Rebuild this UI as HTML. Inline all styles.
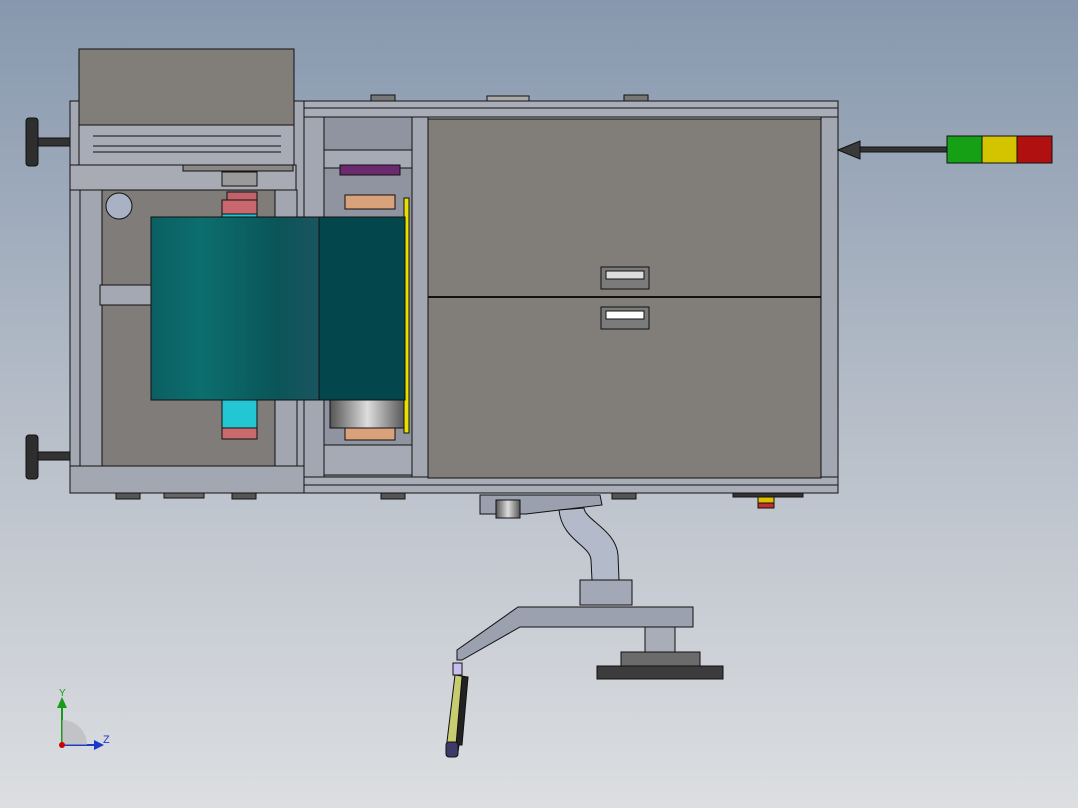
<!DOCTYPE html>
<html><head><style>html,body{margin:0;padding:0;width:1078px;height:808px;overflow:hidden}</style></head>
<body>
<svg width="1078" height="808" viewBox="0 0 1078 808" xmlns="http://www.w3.org/2000/svg">
<defs>
<linearGradient id="bg" x1="0" y1="0" x2="0" y2="1"><stop offset="0" stop-color="#8798ae"/><stop offset="0.55" stop-color="#b9c0ca"/><stop offset="1" stop-color="#dcdee1"/></linearGradient>
<linearGradient id="teal" x1="0" y1="0" x2="1" y2="0"><stop offset="0" stop-color="#0b5f62"/><stop offset="0.3" stop-color="#0c6e6e"/><stop offset="0.75" stop-color="#0a5558"/><stop offset="1" stop-color="#1b5560"/></linearGradient>
<linearGradient id="cyl" x1="0" y1="0" x2="1" y2="0"><stop offset="0" stop-color="#555"/><stop offset="0.5" stop-color="#ddd"/><stop offset="1" stop-color="#555"/></linearGradient>
</defs>
<rect width="1078" height="808" fill="url(#bg)"/>
<g stroke="#111" stroke-width="1">
<!-- knobs -->
<rect x="38" y="138" width="34" height="8" fill="#333"/><rect x="26" y="118" width="12" height="48" rx="3" fill="#2e2e2e"/>
<rect x="38" y="452" width="34" height="8" fill="#333"/><rect x="26" y="435" width="12" height="44" rx="3" fill="#2e2e2e"/>
<!-- left frame -->
<rect x="70" y="101" width="234" height="392" fill="#a4a8b2"/>
<rect x="100" y="188" width="175" height="280" fill="#7f7c79"/>
<rect x="70" y="165" width="226" height="25" fill="#a8abb3"/>
<rect x="80" y="190" width="22" height="278" fill="#a2a6b0"/>
<rect x="275" y="190" width="22" height="278" fill="#a2a6b0"/>
<rect x="100" y="285" width="52" height="20" fill="#a4a8b2"/>
<rect x="70" y="466" width="234" height="27" fill="#a3a7b1"/>
<circle cx="119" cy="206" r="13" fill="#a9b2c4"/>
<!-- top box -->
<rect x="79" y="49" width="215" height="76" fill="#817d79"/>
<rect x="79" y="125" width="215" height="40" fill="#a8acb6"/>
<line x1="93" y1="136" x2="281" y2="136"/><line x1="93" y1="146" x2="281" y2="146"/><line x1="93" y1="152" x2="281" y2="152"/>
<rect x="183" y="165" width="110" height="6" fill="#8a8784"/>
<!-- spindle -->
<rect x="222" y="172" width="35" height="14" fill="#9a9a9a"/>
<rect x="227" y="192" width="30" height="10" fill="#c0636a"/>
<rect x="222" y="200" width="35" height="14" fill="#c9686e"/>
<rect x="222" y="214" width="35" height="4" fill="#1cc7d2"/>
<rect x="222" y="400" width="35" height="28" fill="#22c7d3"/>
<rect x="222" y="428" width="35" height="11" fill="#c96a6e"/>
<!-- right frame -->
<rect x="304" y="101" width="534" height="392" fill="#a6aab4"/>
<rect x="304" y="101" width="534" height="16" fill="#a9adb7"/>
<line x1="304" y1="108" x2="838" y2="108"/>
<rect x="304" y="477" width="534" height="16" fill="#a9adb7"/>
<line x1="304" y1="485" x2="838" y2="485"/>
<rect x="304" y="117" width="20" height="360" fill="#a3a7b1"/>
<rect x="324" y="117" width="90" height="360" fill="#8f94a0"/>
<rect x="324" y="150" width="90" height="18" fill="#a6aab4"/>
<rect x="324" y="445" width="90" height="30" fill="#a6aab4"/>
<rect x="412" y="117" width="16" height="360" fill="#a3a7b1"/>
<rect x="821" y="117" width="17" height="360" fill="#a3a7b1"/>
<rect x="340" y="165" width="60" height="10" fill="#6b2a6e"/>
<rect x="345" y="195" width="50" height="14" fill="#d9a27a"/>
<rect x="345" y="428" width="50" height="12" fill="#d9a27a"/>
<rect x="330" y="400" width="75" height="28" fill="url(#cyl)"/>
<rect x="404" y="198" width="5" height="235" fill="#e8e000"/>
<!-- drawers -->
<rect x="428" y="119" width="393" height="178" fill="#817d79"/>
<rect x="428" y="297" width="393" height="181" fill="#817d79"/>
<line x1="428" y1="297" x2="821" y2="297" stroke-width="2"/>
<rect x="601" y="267" width="48" height="22" fill="#7c7b7c"/><rect x="606" y="271" width="38" height="8" fill="#ddd"/>
<rect x="601" y="307" width="48" height="22" fill="#7c7b7c"/><rect x="606" y="311" width="38" height="8" fill="#fff"/>
<!-- teal sheet -->
<rect x="151" y="217" width="168" height="183" fill="url(#teal)"/>
<rect x="319" y="217" width="86" height="183" fill="#03464c"/>
<!-- bumps -->
<rect x="371" y="95" width="24" height="6" fill="#777"/><rect x="487" y="96" width="42" height="5" fill="#aaa"/><rect x="624" y="95" width="24" height="6" fill="#777"/>
<rect x="116" y="493" width="24" height="6" fill="#555"/><rect x="164" y="493" width="40" height="5" fill="#666"/><rect x="232" y="493" width="24" height="6" fill="#555"/><rect x="381" y="493" width="24" height="6" fill="#555"/><rect x="612" y="493" width="24" height="6" fill="#555"/>
<rect x="733" y="493" width="70" height="4" fill="#333"/>
<rect x="758" y="497" width="16" height="6" fill="#e0c000"/><rect x="758" y="503" width="16" height="5" fill="#c03030"/>
<!-- light tower -->
<polygon points="838,150 860,141 860,159" fill="#3a3a3a"/>
<rect x="860" y="147" width="87" height="5" fill="#333"/>
<rect x="947" y="136" width="35" height="27" fill="#15a015"/>
<rect x="982" y="136" width="35" height="27" fill="#d4c400"/>
<rect x="1017" y="136" width="35" height="27" fill="#b01010"/>
<!-- arm -->
<polygon points="480,495 600,495 602,505 526,514 480,514" fill="#9aa0ad"/>
<rect x="496" y="500" width="24" height="18" fill="url(#cyl)"/>
<path d="M559,510 C562,540 590,545 591,560 L592,580 L619,580 L618,555 C616,530 585,520 584,508 Z" fill="#b3bbcb"/>
<rect x="580" y="580" width="52" height="25" fill="#a2a8b5"/>
<polygon points="518,607 693,607 693,627 520,627 462,660 457,660 457,650" fill="#9ba1ae"/>
<rect x="645" y="627" width="30" height="25" fill="#a8adb8"/>
<rect x="621" y="652" width="79" height="14" fill="#6b6b6b"/>
<rect x="597" y="666" width="126" height="13" fill="#3c3c3c"/>
<rect x="453" y="663" width="9" height="12" fill="#c8bff0"/>
<polygon points="455,675 468,677 458,752 446,750" fill="#c7cc70"/>
<polygon points="462,677 468,677 462,745 456,745" fill="#222"/>
<rect x="446" y="742" width="12" height="15" rx="3" fill="#3d3a6a"/>
</g>
<!-- triad -->
<line x1="62" y1="745" x2="62" y2="705" stroke="#1a9a1a" stroke-width="2"/><polygon points="57,708 67,708 62,697" fill="#1a9a1a"/>
<line x1="62" y1="745" x2="96" y2="745" stroke="#1a3acc" stroke-width="2"/><polygon points="94,740 94,750 104,745" fill="#1a3acc"/>
<path d="M62,745 L62,720 A25,25 0 0 1 87,745 Z" fill="#b5b5b5" opacity="0.6"/>
<circle cx="62" cy="745" r="3" fill="#c00"/>
<text x="59" y="696" font-family="Liberation Sans,sans-serif" font-size="10" fill="#1a9a1a">Y</text>
<text x="103" y="743" font-family="Liberation Sans,sans-serif" font-size="11" fill="#1a3acc">Z</text>
</svg>
</body></html>
